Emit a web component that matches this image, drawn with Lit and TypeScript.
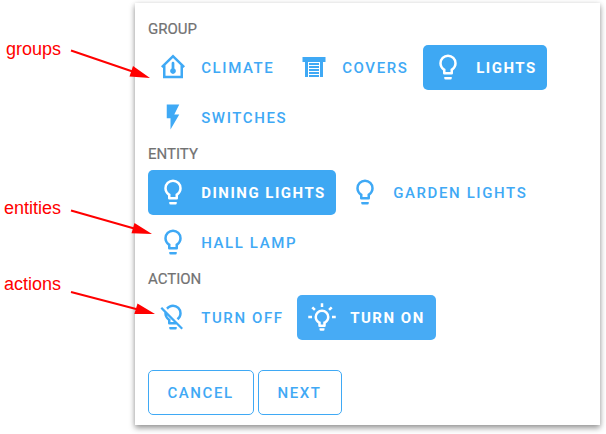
import { LitElement, html, css, svg } from "lit";
import { customElement, property } from "lit/decorators.js";
import { classMap } from "lit/directives/class-map.js";
import { styleMap } from "lit/directives/style-map.js";

const bulb =
  "M12,2A7,7 0 0,1 19,9C19,11.38 17.81,13.47 16,14.74V17A1,1 0 0,1 15,18H9A1,1 0 0,1 8,17V14.74C6.19,13.47 5,11.38 5,9A7,7 0 0,1 12,2M9,21V20H15V21A1,1 0 0,1 14,22H10A1,1 0 0,1 9,21M12,4A5,5 0 0,0 7,9C7,11.05 8.23,12.81 10,13.58V16H14V13.58C15.77,12.81 17,11.05 17,9A5,5 0 0,0 12,4Z";

const icons: Record<string, string> = {
  bulb,
  bulbOn:
    "M20,11H23V13H20V11M1,11H4V13H1V11M13,1V4H11V1H13M4.92,3.5L7.05,5.64L5.63,7.05L3.5,4.93L4.92,3.5M16.95,5.63L19.07,3.5L20.5,4.93L18.37,7.05L16.95,5.63M12,6A6,6 0 0,1 18,12C18,14.22 16.79,16.16 15,17.2V19A1,1 0 0,1 14,20H10A1,1 0 0,1 9,19V17.2C7.21,16.16 6,14.22 6,12A6,6 0 0,1 12,6M14,21V22A1,1 0 0,1 13,23H11A1,1 0 0,1 10,22V21H14M11,18H13V15.87C14.73,15.43 16,13.86 16,12A4,4 0 0,0 12,8A4,4 0 0,0 8,12C8,13.86 9.27,15.43 11,15.87V18Z",
  bulbOff:
    "M12,2C9.76,2 7.78,3.05 6.5,4.68L7.93,6.11C8.84,4.84 10.32,4 12,4A5,5 0 0,1 17,9C17,10.68 16.16,12.16 14.89,13.06L16.31,14.5C17.94,13.21 19,11.24 19,9A7,7 0 0,0 12,2M3.28,4L2,5.27L5.04,8.3C5,8.53 5,8.76 5,9C5,11.38 6.19,13.47 8,14.74V17A1,1 0 0,0 9,18H14.73L18.73,22L20,20.72L3.28,4M7.23,10.5L12.73,16H10V13.58C8.68,13 7.66,11.88 7.23,10.5M9,20V21A1,1 0 0,0 10,22H14A1,1 0 0,0 15,21V20H9Z",
  flash: "M7,2V13H10V22L17,10H13L17,2H7Z",
  climate:
    "M12,2L2.4,11.4L3.7,12.7L4,12.4V21H20V12.4L20.3,12.7L21.6,11.4L12,2M12,4.8L18,10.6V19H6V10.6L12,4.8M12,7.8A1.1,1.1 0 0,0 10.9,8.9V13.2A2.3,2.3 0 1,0 13.1,13.2V8.9A1.1,1.1 0 0,0 12,7.8Z",
  cover:
    "M2.8,4H21.2V8H2.8ZM4.8,8H7.2V20H4.8ZM16.8,8H19.2V20H16.8ZM8,8.8H16V10.4H8ZM8,11.2H16V12.8H8ZM8,13.6H16V15.2H8ZM8,16H16V17.6H8ZM8,18.4H16V20H8Z",
};

interface Choice {
  label: string;
  width: number;
  icon?: string;
  selected?: boolean;
  light?: boolean;
}

const groups: Choice[] = [
  { label: "CLIMATE", icon: "climate", width: 137 },
  { label: "COVERS", icon: "cover", width: 130 },
  { label: "LIGHTS", icon: "bulb", width: 124, selected: true },
  { label: "SWITCHES", icon: "flash", width: 150 },
];
const entities: Choice[] = [
  { label: "DINING LIGHTS", icon: "bulb", width: 188, selected: true },
  { label: "GARDEN LIGHTS", icon: "bulb", width: 198 },
  { label: "HALL LAMP", icon: "bulb", width: 160 },
];
const actions: Choice[] = [
  { label: "TURN OFF", icon: "bulbOff", width: 145 },
  { label: "TURN ON", icon: "bulbOn", width: 139, selected: true, light: true },
];
const footer: Choice[] = [
  { label: "CANCEL", width: 106 },
  { label: "NEXT", width: 84 },
];

@customElement("choice-button")
class ChoiceButton extends LitElement {
  @property({ attribute: false }) choice!: Choice;

  static styles = css`
    :host { display: block; }
    .btn {
      display: flex; align-items: center; box-sizing: border-box;
      height: 45px; margin: 0; padding: 0 0 0 10px; border: 0; border-radius: 5px;
      background: transparent; color: #3fa9f5; white-space: nowrap;
      font: 500 15px/20px Roboto, sans-serif; letter-spacing: 1.6px;
    }
    .selected { background: #3ea8f3; color: #fff; font-weight: 700; letter-spacing: 1.5px; }
    .light { background: #47abf5; }
    .outlined { border: 1px solid #3fa9f5; padding: 0 0 0 18.4px; }
    .icon { flex: none; width: 30px; height: 30px; margin: 0 13.2px 1px 0; fill: currentColor; }
  `;

  render() {
    const { label, icon, width, selected, light } = this.choice;
    return html`<button
      class=${classMap({ btn: true, selected: !!selected, light: !!light, outlined: !icon })}
      style=${styleMap({ width: `${width}px` })}
    >${icon
        ? html`<svg class="icon" viewBox="0 0 24 24">${svg`<path fill-rule="evenodd" d=${icons[icon]}></path>`}</svg>`
        : null}<span>${label}</span></button>`;
  }
}

@customElement("app-root")
class AppRoot extends LitElement {
  static styles = css`
    :host { display: block; position: relative; width: 606px; height: 434px; overflow: hidden; background: #fff; }
    .card {
      box-sizing: border-box; width: 465px; height: 422px; margin: 3px 0 0 135px;
      padding: 17px 13px 0; background: #fff;
      box-shadow: 0 3px 6px rgba(0, 0, 0, 0.38), 0 1px 5px rgba(0, 0, 0, 0.1);
      display: flow-root;
    }
    .title { font: 400 15px/18px Roboto, sans-serif; color: #727272; height: 25px; -webkit-text-stroke: 0.2px #727272; }
    .row { display: flex; flex-wrap: wrap; gap: 5px 4px; }
    .section { margin-bottom: 5px; }
    .footer { margin-top: 30px; }
    .notes { position: absolute; inset: 0; width: 606px; height: 434px; pointer-events: none; }
    .note { font: 18px "Liberation Sans", Arial, sans-serif; fill: #f00; }
    .line { stroke: #f00; stroke-width: 2; }
    .head { fill: #f00; }
  `;

  private row(choices: Choice[]) {
    return choices.map((c) => html`<choice-button .choice=${c}></choice-button>`);
  }

  private section(title: string, choices: Choice[]) {
    return html`<div class="section">
      <div class="title">${title}</div>
      <div class="row">${this.row(choices)}</div>
    </div>`;
  }

  render() {
    return html`
      <div class="card">
        ${this.section("GROUP", groups)}
        ${this.section("ENTITY", entities)}
        ${this.section("ACTION", actions)}
        <div class="row footer">${this.row(footer)}</div>
      </div>
      <svg class="notes" viewBox="0 0 606 434">
        <text class="note" x="6" y="55" textLength="55">groups</text>
        <text class="note" x="4" y="214" textLength="57">entities</text>
        <text class="note" x="4" y="290" textLength="57">actions</text>
        <path class="line" d="M71,50.5L134,72M71,210.5L136,229M71,292L138,309.5"></path>
        <path class="head" d="M133,66L150,78L129.5,76.5ZM134.5,223L152,234L131.5,233.3ZM137.5,303.5L155,314L134.3,314Z"></path>
      </svg>
    `;
  }
}
